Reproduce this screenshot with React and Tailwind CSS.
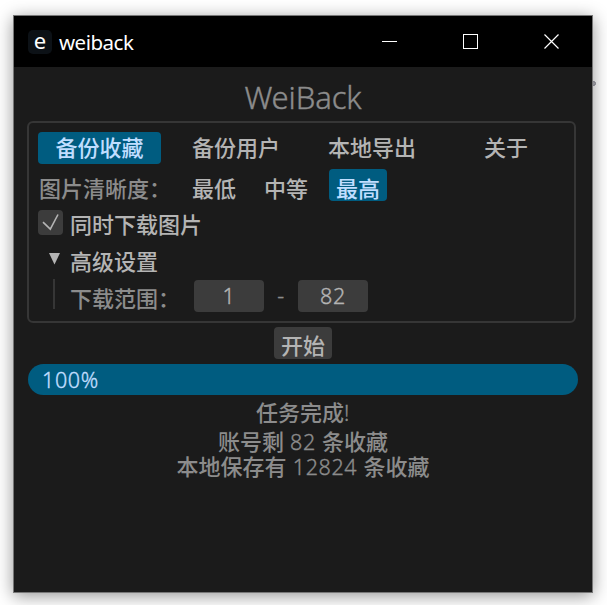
import React from 'react';

const cjkBase = "font-['Noto_Sans_CJK_SC','Liberation_Sans',sans-serif] text-[22px] font-medium whitespace-nowrap";
const cjk = `${cjkBase} leading-[32px]`;
const numBase = "font-['Noto_Sans',sans-serif] text-[21.5px] font-light tracking-[0.6px] whitespace-pre [-webkit-text-stroke:0.35px_currentColor]";
const num = `${numBase} leading-[32px]`;

function TitleBar() {
  return (
    <div className="flex h-[51px] items-center bg-black">
      <div className="ml-[14px] flex h-[24px] w-[24px] items-center justify-center rounded-[5px] bg-[#0c1116] pb-[4px] font-['Noto_Sans',sans-serif] text-[22px] leading-none text-white">
        e
      </div>
      <span className="mt-[1px] ml-[7px] font-['Noto_Sans',sans-serif] text-[20.5px] leading-[28px] tracking-[-0.5px] text-white">weiback</span>
      <div className="flex-1" />
      <svg className="mr-[26px] h-[15px] w-[202px]" viewBox="0 0 202 15" fill="none" stroke="#fff" shapeRendering="crispEdges">
        <path d="M18 7.5h15M99.5.5h14v14h-14z" />
        <path d="M180.5.5l14 14M194.5.5l-14 14" strokeWidth="1.2" shapeRendering="auto" />
      </svg>
    </div>
  );
}

export default function App() {
  return (
    <div className="relative h-[605px] w-[607px] overflow-hidden bg-white pt-[15px] pl-[13px]">
      <div className="absolute top-[81px] left-[590px] h-[5px] w-[6px] rounded-full border border-[#8e8e98] bg-[#b5b5bd]" />
      <div className="relative h-[578px] w-[580px] border border-[#777] bg-[#1b1b1b] shadow-[0_3px_16px_rgba(0,0,0,0.42)]">
        <TitleBar />
        <div className="flex h-[54px] items-center justify-center pt-[7px] font-['Noto_Sans',sans-serif] text-[31px] font-light tracking-[-0.1px] text-[#8c8c8c] [-webkit-text-stroke:0.4px_currentColor]">
          WeiBack
        </div>
        <div className="ml-[13px] h-[202px] w-[549px] rounded-[6px] border-2 border-[#363636] pt-[9px] pl-[9px]">
          <div className="flex h-[37px] text-[#b4b4b4]">
            <div className="h-[32px] w-[123px] rounded-[4px] bg-[#005c80] text-center text-[#c0deff]">
              <div className={`${cjk} -mt-[2px]`}>备份收藏</div>
            </div>
            <div className={`${cjk} -mt-[2px] ml-[31px]`}>备份用户</div>
            <div className={`${cjk} -mt-[2px] ml-[48px]`}>本地导出</div>
            <div className={`${cjk} -mt-[2px] ml-[68px]`}>关于</div>
          </div>
          <div className="flex h-[41px] text-[#b4b4b4]">
            <div className={`${cjk} ml-[1px] w-[153px] pt-[2px] text-[#8c8c8c]`}>图片清晰度：</div>
            <div className={`${cjk} w-[72px] pt-[2px]`}>最低</div>
            <div className={`${cjk} w-[65px] pt-[2px]`}>中等</div>
            <div className={`${cjk} flex h-[32px] w-[58px] justify-center rounded-[4px] bg-[#005c80] pt-[2px] text-[#c0deff]`}>最高</div>
          </div>
          <div className="flex h-[36px] text-[#b4b4b4]">
            <div className="h-[25px] w-[25px] rounded-[4px] bg-[#3c3c3c]">
              <svg className="h-[25px] w-[25px]" viewBox="0 0 25 25" fill="none" stroke="#b4b4b4" strokeWidth="1.6">
                <path d="M5 12.2l7.3 7L20 4.500" />
              </svg>
            </div>
            <div className={`${cjk} -mt-[3px] ml-[7px]`}>同时下载图片</div>
          </div>
          <div className="flex h-[34px] text-[#b4b4b4]">
            <svg className="mt-[7px] ml-[11px] h-[12px] w-[11px]" viewBox="0 0 11 12" fill="#b4b4b4">
              <path d="M0 0h11L5.500 11.500z" />
            </svg>
            <div className={`${cjk} -mt-[2px] ml-[10px]`}>高级设置</div>
          </div>
          <div className="flex h-[32px]">
            <div className="mt-[-1px] ml-[15px] h-[30px] w-[2px] bg-[#363636]" />
            <div className={`${cjk} ml-[15px] w-[124px] pt-[1px] text-[#8c8c8c]`}>下载范围：</div>
            <div className={`${num} h-[32px] w-[70px] rounded-[4px] bg-[#3c3c3c] text-center text-[#b4b4b4]`}>1</div>
            <div className={`${num} w-[34px] text-center text-[#8c8c8c]`}>-</div>
            <div className={`${num} h-[32px] w-[70px] rounded-[4px] bg-[#3c3c3c] text-center text-[#b4b4b4]`}>82</div>
          </div>
        </div>
        <div className={`${cjk} mt-[4px] ml-[260px] flex h-[32px] w-[58px] justify-center rounded-[4px] bg-[#3c3c3c] pt-[1px] text-[#b4b4b4]`}>开始</div>
        <div className={`${num} mt-[5px] ml-[14px] h-[31px] w-[550px] rounded-full bg-[#005c80] pl-[14px] text-[#c0deff]`}>100%</div>
        <div className="flex flex-col items-center pt-[2px] text-[#8c8c8c]">
          <div className={`${cjkBase} flex h-[29px] items-baseline leading-[29px]`}>任务完成<span className={numBase}>!</span></div>
          <div className={`${cjkBase} flex h-[27px] items-baseline leading-[28px]`}>账号剩<span className={numBase}> 82 </span>条收藏</div>
          <div className={`${cjkBase} flex h-[25px] items-baseline leading-[25px]`}>本地保存有<span className={numBase}> 12824 </span>条收藏</div>
        </div>
      </div>
    </div>
  );
}
